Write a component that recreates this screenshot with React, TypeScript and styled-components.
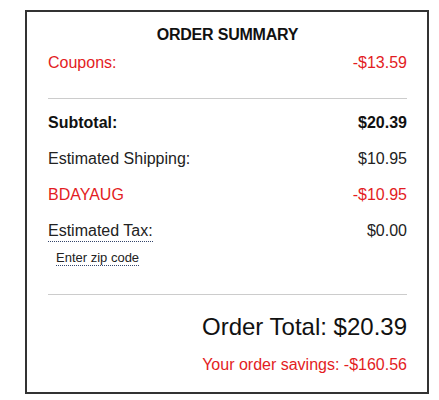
import React from 'react';
import styled, { createGlobalStyle } from 'styled-components';

const GlobalStyle = createGlobalStyle`
    html, body {
        margin: 0;
        padding: 0;
        background: #ffffff;
    }

    body {
        font-family: 'Liberation Sans', Arial, sans-serif;
        color: #222222;
    }
`;

const Page = styled.div`
    padding: 10px 0 0 25px;
`;

const SummaryCard = styled.section`
    box-sizing: border-box;
    width: 404px;
    border: 2px solid #333333;
    padding: 13px 20px 17px 21px;
    display: flex;
    flex-direction: column;
`;

const Title = styled.h2`
    margin: 0;
    font-size: 16px;
    line-height: 20px;
    font-weight: 700;
    text-align: center;
    color: #111111;
    letter-spacing: -0.2px;
`;

const Row = styled.div<{ $tone?: 'red' | 'default'; $bold?: boolean; $top?: number }>`
    display: flex;
    justify-content: space-between;
    align-items: baseline;
    font-size: 16px;
    line-height: 20px;
    margin-top: ${p => p.$top ?? 16}px;
    font-weight: ${p => (p.$bold ? 700 : 400)};
    color: ${p => (p.$tone === 'red' ? '#e31c23' : p.$bold ? '#111111' : '#222222')};
`;

const Divider = styled.hr<{ $top: number }>`
    border: none;
    border-top: 1px solid #cccccc;
    margin: ${p => p.$top}px 0 0;
    height: 0;
`;

const DottedLabel = styled.span`
    border-bottom: 1px dotted #34456b;
`;

const ZipLink = styled.a`
    align-self: flex-start;
    margin: 8px 0 0 8px;
    font-size: 13px;
    line-height: 15px;
    color: #222222;
    text-decoration: none;
    border-bottom: 1px dotted #34456b;
    cursor: pointer;
`;

const OrderTotal = styled.div`
    margin-top: 17px;
    text-align: right;
    font-size: 24px;
    line-height: 30px;
    color: #111111;
`;

const Savings = styled.div`
    margin-top: 13px;
    text-align: right;
    font-size: 16px;
    line-height: 20px;
    color: #e31c23;
`;

export default function App() {
    return (
        <>
            <GlobalStyle />
            <Page>
                <SummaryCard>
                    <Title>ORDER SUMMARY</Title>
                    <Row $tone="red" $top={8}>
                        <span>Coupons:</span>
                        <span>-$13.59</span>
                    </Row>
                    <Divider $top={25} />
                    <Row $bold $top={14}>
                        <span>Subtotal:</span>
                        <span>$20.39</span>
                    </Row>
                    <Row>
                        <span>Estimated Shipping:</span>
                        <span>$10.95</span>
                    </Row>
                    <Row $tone="red">
                        <span>BDAYAUG</span>
                        <span>-$10.95</span>
                    </Row>
                    <Row>
                        <DottedLabel>Estimated Tax:</DottedLabel>
                        <span>$0.00</span>
                    </Row>
                    <ZipLink>Enter zip code</ZipLink>
                    <Divider $top={28} />
                    <OrderTotal>Order Total: $20.39</OrderTotal>
                    <Savings>Your order savings: -$160.56</Savings>
                </SummaryCard>
            </Page>
        </>
    );
}
